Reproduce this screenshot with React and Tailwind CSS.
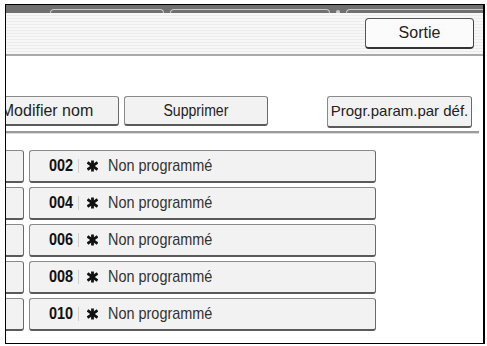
const rows = ['002', '004', '006', '008', '010'];

const btn =
  'bg-[#f2f2f2] border border-[#8a8a8a] border-b-2 border-b-[#5a5a5a] border-r-[#6a6a6a] rounded-[3px]';

const Star = () => (
  <svg width="11" height="12" viewBox="0 0 11 12" className="shrink-0">
    <g stroke="#111" strokeWidth="2.8" strokeLinecap="butt">
      <line x1="5.5" y1="0.5" x2="5.5" y2="11.5" />
      <line x1="0.5" y1="2.4" x2="10.5" y2="9.6" />
      <line x1="0.5" y1="9.6" x2="10.5" y2="2.4" />
    </g>
  </svg>
);

const App = () => {
  return (
    <div className="w-[487px] h-[346px] bg-white pl-[5px] pt-[4px] font-[family-name:'Liberation_Sans',Arial,sans-serif] text-[#222]">
      <div className="w-[480px] h-[340px] border border-black border-r-2 flex flex-col overflow-hidden">
        {/* Tab strip */}
        <div className="h-[8px] bg-[#707070] flex items-end gap-[6px] pl-[44px] shrink-0">
          <div className="w-[114px] h-[4px] border-t border-x border-[#c9c9c9] rounded-t-[4px]" />
          <div className="w-[160px] h-[4px] border-t border-x border-[#c9c9c9] rounded-t-[4px]" />
          <div className="w-[4px] h-[3px] bg-[#c9c9c9] rounded-t-sm" />
          <div className="flex-1 h-[4px] border-t border-l border-[#c9c9c9] rounded-tl-[4px]" />
        </div>

        {/* Header */}
        <div className="h-[43px] shrink-0 border-b-2 border-[#a9a9a9] bg-[repeating-linear-gradient(to_bottom,#f7f7f7_0px,#f7f7f7_2px,#ececec_2px,#ececec_3px)] flex items-start justify-end pr-[9px] pt-[5px]">
          <button className="w-[109px] h-[31px] bg-[#fbfbfb] border border-[#555] border-b-2 border-b-[#333] border-r-[#444] rounded-[4px] text-[16px] flex items-center justify-center">
            Sortie
          </button>
        </div>

        {/* Action buttons */}
        <div className="mt-[40px] flex items-start shrink-0 whitespace-nowrap">
          <div className={`${btn} ml-[-31px] w-[144px] h-[30px] flex items-center justify-center text-[16px]`}>
            Modifier nom
          </div>
          <div className={`${btn} ml-[5px] w-[144px] h-[30px] flex items-center justify-center text-[16px]`}>
            <span className="inline-block scale-x-[0.88]">Supprimer</span>
          </div>
          <div className={`${btn} ml-[59px] w-[145px] h-[32px] flex items-center justify-center text-[15px]`}>
            Progr.param.par déf.
          </div>
        </div>

        {/* Divider */}
        <div className="mt-[3px] mr-[4px] h-[3px] border-t-2 border-[#9a9a9a] border-b border-b-[#dcdcdc] shrink-0" />

        {/* List */}
        <div className="mt-[16px] flex flex-col gap-[4px]">
          {rows.map((n) => (
            <div key={n} className="flex h-[33px] gap-[5px]">
              <div className={`${btn} ml-[-20px] w-[38px]`} />
              <div className={`${btn} w-[347px] flex items-center pl-[19px] whitespace-nowrap`}>
                <span className="w-[29px] shrink-0">
                  <span className="inline-block font-bold text-[17px] text-[#111] scale-x-[0.85] origin-left">{n}</span>
                </span>
                <span className="w-px h-[14px] bg-[#cfcfcf] mr-[8px] shrink-0" />
                <Star />
                <span className="ml-[10px] inline-block text-[17px] text-[#333] scale-x-[0.85] origin-left">
                  Non programmé
                </span>
              </div>
            </div>
          ))}
        </div>
      </div>
    </div>
  );
};

export default App;
